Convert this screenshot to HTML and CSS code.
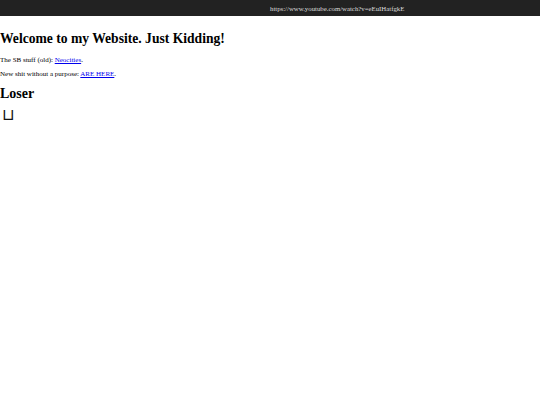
FILE: index.html
```html
<!DOCTYPE html>
<html>
<head>
<meta charset="utf-8">
<link rel="stylesheet" href="styles.css">
</head>
<body>
<div class="bar"><span class="url">https://www.youtube.com/watch?v=eEuIHatfgkE</span></div>
<h1 class="title">Welcome to my Website. Just Kidding!</h1>
<p class="line">The SB stuff (old): <a href="#">Neocities</a>.</p>
<p class="line">New shit without a purpose: <a href="#">ARE HERE</a>.</p>
<h2 class="sub">Loser</h2>
<div class="cup">⊔</div>
</body>
</html>
```
FILE: styles.css
```css
html, body { margin: 0; padding: 0; background: #fff; }
body { font-family: "Liberation Serif", serif; color: #000; }
.bar { height: 16px; background: #222; display: flex; align-items: center; padding-left: 270px; }
.url { color: #ddd; font-size: 6.8px; }
.title { font-size: 13.6px; margin: 15px 0 9px; line-height: 1.15; }
.line { font-size: 7px; margin: 6px 0; font-weight: normal; }
.line a { color: #0000ee; }
.sub { font-size: 14px; margin: 8px 0 5px; }
.cup { font-family: "DejaVu Sans", sans-serif; font-size: 16px; margin-left: 2px; line-height: 1; color: #111; }
```
